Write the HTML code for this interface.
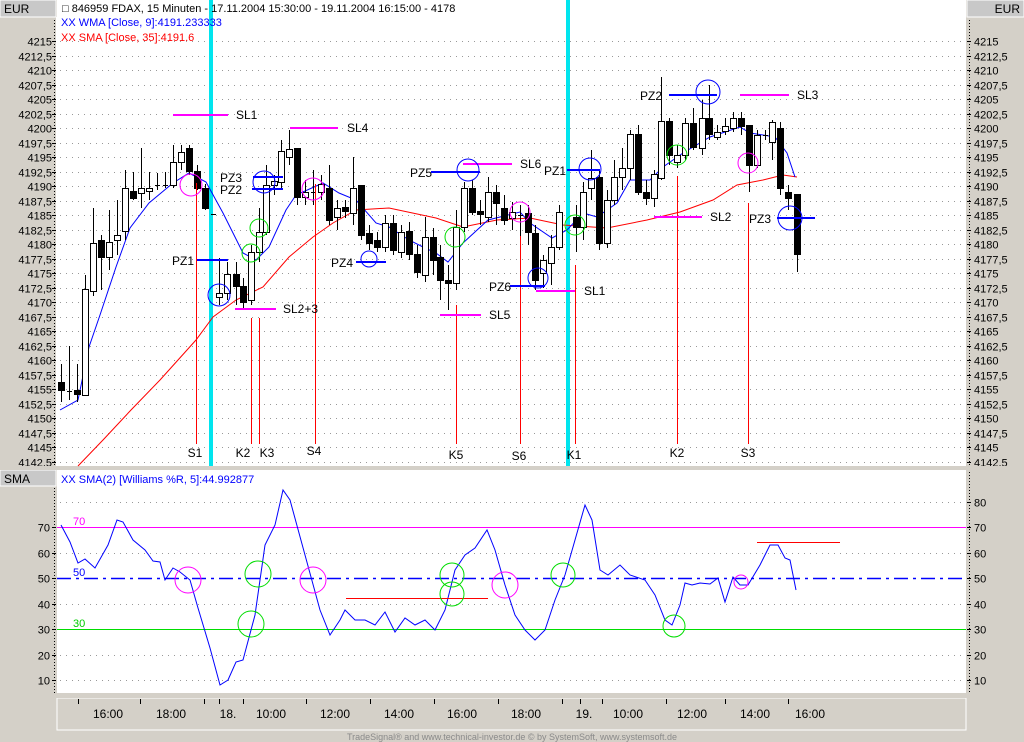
<!DOCTYPE html>
<html><head><meta charset="utf-8"><style>
html,body{margin:0;padding:0;background:#d4d0c8;}
svg{display:block;font-family:"Liberation Sans",sans-serif;}
</style></head><body>
<svg id="s" width="1024" height="742" xmlns="http://www.w3.org/2000/svg">
<rect x="0" y="0" width="1024" height="742" fill="#d4d0c8"/>
<rect x="57" y="0" width="909" height="466" fill="#fff"/>
<rect x="57" y="470" width="909" height="223" fill="#fff"/>
<line x1="56.5" y1="17" x2="56.5" y2="466" stroke="#fff"/>
<rect x="0" y="0" width="56" height="17" fill="#c8c8c8" stroke="#fff"/>
<rect x="967" y="0" width="57" height="17" fill="#c8c8c8" stroke="#fff"/>
<text x="4" y="13" font-size="12">EUR</text>
<text x="1020" y="13" font-size="12" text-anchor="end">EUR</text>
<rect x="0" y="470" width="56" height="16" fill="#c8c8c8" stroke="#fff"/>
<text x="4" y="483" font-size="12">SMA</text>
<rect x="57" y="698" width="909" height="32" fill="#d4d0c8" stroke="#fff"/>
<g id="g"></g>
</svg>
<script>
var g=document.getElementById('g'),h='';
function L(x1,y1,x2,y2,c,w,extra){h+='<line x1="'+x1+'" y1="'+y1+'" x2="'+x2+'" y2="'+y2+'" stroke="'+c+'" stroke-width="'+(w||1)+'" '+(extra||'')+'/>';}
function T(x,y,t,c,a,fs){h+='<text x="'+x+'" y="'+y+'" font-size="'+(fs||11)+'" fill="'+(c||'#000')+'"'+(a?' text-anchor="'+a+'"':'')+'>'+t+'</text>';}
function C(x,y,r,c){h+='<circle cx="'+x+'" cy="'+y+'" r="'+r+'" fill="none" stroke="'+c+'"/>';}
function P(pts,c,w){h+='<polyline fill="none" stroke="'+c+'" stroke-width="'+(w||1)+'" points="'+pts+'"/>';}
// price grid
for(var k=0;k<30;k++){var y=Math.round(41+k*14.517)+.5;var p=4215-k*2.5;var s=(p%1?p.toFixed(1).replace('.',','):p);
L(60,y,966,y,'#999',1,'stroke-dasharray="1,5"');L(52,y,56,y,'#000');L(967,y,971,y,'#000');
T(52,y+4,s,'#000','end');T(974,y+4,s);}
L(969.5,20,969.5,466,'#000',1,'stroke-dasharray="1,2"');L(54.5,20,54.5,466,'#000',1,'stroke-dasharray="1,2"');
// separator
h+='<rect x="0" y="466" width="1024" height="4" fill="#d4d0c8"/>';
// cyan
L(211,0,211,466,'#00e5ee',4);L(568,0,568,466,'#00e5ee',4);
// header text
T(62,12,'&#x25A1; 846959  FDAX, 15 Minuten - 17.11.2004 15:30:00 - 19.11.2004 16:15:00 - 4178','#000');
T(61,26,'XX WMA [Close, 9]:4191.233333','#0000ff');
T(61,41,'XX SMA [Close, 35]:4191.6','#ff0000');
// SMA red
P('78,466 103,440 131,410 160,380 196,340 213,317 236,300 263,287 289,257 313,237 333,223 356,210 389,208 436,218 463,227 497,220 530,218 563,225 607,228 647,220 680,212 713,200 737,185 763,180 783,175 797,177','#ff0000');
// WMA blue
P('60,410 78,400 89,347 100,315 116,267 130,228 149,203 173,183 189,173 206,182 223,213 243,253 256,260 269,247 286,210 296,195 323,183 339,193 356,200 376,223 389,227 409,240 423,247 436,253 448,262 463,243 488,220 520,212 530,223 552,238 567,230 583,213 597,217 617,203 630,180 650,180 663,167 683,153 710,137 740,127 750,133 763,135 775,137 787,153 795,177','#0000ff');
// candles [x,top,bot,fill(1 black,0 white,2 cross),wt,wb]
var c=[[61,382,390,1,364,402],[69,391,391,2,346,400],[77,390,394,1,364,402],[85,289,395,0,275,396],[93,243,291,0,208,296],[101,240,257,1,235,290],[109,242,257,0,210,270],[117,235,240,0,200,255],[125,188,231,0,170,240],[133,191,198,1,172,200],[141,188,193,0,148,208],[149,188,191,0,172,200],[157,185,185,2,173,190],[165,185,185,2,172,188],[173,162,185,0,145,188],[181,152,162,0,145,170],[189,148,171,1,145,175],[197,171,188,1,165,190],[205,188,208,1,184,210],[213,214,214,2,214,214],[219,293,297,0,258,305],[227,274,293,0,262,300],[236,274,286,1,262,305],[243,286,302,1,278,310],[251,252,300,0,245,305],[259,232,252,0,208,262],[266,185,232,0,165,235],[274,181,185,0,175,195],[281,151,182,0,140,190],[289,149,157,0,130,165],[297,148,197,1,148,205],[305,192,197,0,180,205],[313,192,192,2,170,205],[321,184,192,0,175,200],[329,188,220,1,165,225],[337,208,217,0,200,230],[345,207,211,1,200,218],[353,188,213,0,157,225],[361,185,235,1,185,240],[369,233,243,1,225,250],[377,240,247,1,232,252],[385,223,247,0,215,252],[393,223,250,1,215,255],[401,232,252,0,225,258],[409,231,254,1,222,260],[417,254,272,1,245,278],[425,237,275,0,217,282],[433,237,260,1,228,275],[440,257,280,1,245,300],[448,280,283,1,265,310],[456,227,283,0,210,290],[464,188,227,0,182,232],[472,188,212,1,180,215],[480,211,213,1,200,225],[488,192,217,0,177,222],[496,192,203,1,185,225],[504,208,220,1,195,225],[512,212,218,0,202,230],[520,215,215,2,205,240],[528,213,232,1,205,245],[535,233,280,1,225,290],[543,260,273,0,255,288],[551,247,263,0,235,285],[559,212,247,0,205,250],[576,217,227,1,205,252],[583,192,227,0,182,240],[591,178,188,0,150,200],[599,177,243,1,170,250],[607,200,243,0,190,248],[614,177,200,0,160,205],[622,168,177,0,148,190],[630,134,168,0,130,180],[638,134,192,1,125,195],[646,192,198,1,180,205],[654,174,198,0,170,207],[661,121,178,0,77,180],[669,121,155,1,118,165],[677,155,162,0,145,168],[685,123,155,0,118,160],[693,123,147,1,108,150],[702,118,148,0,100,155],[709,118,134,1,85,140],[717,132,137,0,125,140],[725,126,131,0,118,135],[733,118,128,0,112,132],[741,118,126,1,112,135],[749,125,165,1,125,192],[757,135,165,0,130,168],[765,135,135,2,130,140],[772,122,142,0,120,160],[780,128,188,1,122,195],[788,192,198,1,185,210],[797,194,254,1,194,272]];
c.forEach(function(b){var x=b[0]+.5;L(x,b[4],x,b[5],'#000');
if(b[3]==2){L(b[0]-2,b[1]+.5,b[0]+3,b[1]+.5,'#000');}
else h+='<rect x="'+(b[0]-2.5)+'" y="'+b[1]+'.5" width="6" height="'+Math.max(b[2]-b[1],3)+'" fill="'+(b[3]?'#000':'#fff')+'" stroke="#000"/>';});
// red verticals + labels
[[196,183,'S1'],[251,318,'K2'],[259,318,'K3'],[315,184,'S4'],[456,305,'K5'],[520,236,'S6'],[575,265,'K1'],[677,176,'K2'],[748,203,'S3']].forEach(function(v){L(v[0]+.5,v[1],v[0]+.5,444,'#ff0000');});
T(195,457,'S1','#000','middle',12);T(243,457,'K2','#000','middle',12);T(267,457,'K3','#000','middle',12);T(314,455,'S4','#000','middle',12);T(456,459,'K5','#000','middle',12);T(519,460,'S6','#000','middle',12);T(574,459,'K1','#000','middle',12);T(677,457,'K2','#000','middle',12);T(748,457,'S3','#000','middle',12);
// SL magenta
[[173,228,115,'SL1',236],[290,338,128,'SL4',347],[235,276,309,'SL2+3',283],[440,481,315,'SL5',489],[463,512,164,'SL6',520],[536,575,291,'SL1',584],[654,702,217,'SL2',710],[740,789,95,'SL3',797]].forEach(function(s){L(s[0],s[2],s[1],s[2],'#ff00ff',2);T(s[4],s[2]+4,s[3],'#000',null,12);});
// PZ blue
[[197,228,260,'PZ1',172],[253,283,177,'PZ3',220],[252,283,189,'PZ2',220],[356,386,262,'PZ4',331],[431,480,172,'PZ5',410],[510,545,286,'PZ6',489],[567,600,170,'PZ1',544],[669,717,95,'PZ2',640],[777,815,218,'PZ3',749]].forEach(function(s){L(s[0],s[2],s[1],s[2],'#0000ff',2);T(s[4],s[2]+5,s[3],'#000',null,12);});
C(219,295,11,'#0000ff');C(264,182,11,'#0000ff');C(468,170,11,'#0000ff');C(590,169,11,'#0000ff');C(708,92,12,'#0000ff');C(790,218,12,'#0000ff');C(369,259,8,'#0000ff');C(538,278,10,'#0000ff');
C(191,185,11,'#ff00ff');C(313,189,11,'#ff00ff');C(520,212,10,'#ff00ff');C(748,163,10,'#ff00ff');
C(259,228,9,'#00dd00');C(251,253,9,'#00dd00');C(455,237,10,'#00dd00');C(575,225,10,'#00dd00');C(677,155,10,'#00dd00');
// lower panel
[80,60,40,20,10].forEach(function(v){var y=Math.round(527+(70-v)*2.55)+.5;L(60,y,966,y,'#999',1,'stroke-dasharray="1,5"');});
[80,70,60,50,40,30,20,10].forEach(function(v){var y=Math.round(527+(70-v)*2.55)+.5;L(967,y,971,y,'#000');T(974,y+4,v);if(v<80){L(52,y,56,y,'#000');T(50,y+4,v,'#000','end');}});
L(969.5,472,969.5,693,'#000',1,'stroke-dasharray="1,2"');L(54.5,488,54.5,693,'#000',1,'stroke-dasharray="1,2"');
L(57,527.5,966,527.5,'#ff00ff');L(57,629.5,966,629.5,'#00dd00');L(57,578.5,966,578.5,'#0000ff',1.5,'stroke-dasharray="14,5,3,5"');
T(73,525,'70','#ff00ff');T(73,576,'50','#0000ff');T(73,627,'30','#00cc00');
T(61,483,'XX SMA(2) [Williams %R, 5]:44.992877','#0000ff');
P('61,525 70,542 78,563 85,559 95,568 108,545 117,520 123,522 133,540 145,550 153,561 160,562 165,580 173,568 180,572 190,580 198,608 210,648 220,685 228,680 236,662 243,660 255,615 265,545 275,525 283,490 290,500 305,555 320,610 330,635 340,620 345,610 355,620 365,620 375,625 385,612 395,632 405,618 415,625 425,620 435,630 445,610 455,570 465,555 475,548 487,530 495,550 505,585 515,615 525,630 535,640 545,630 555,600 565,575 575,540 585,505 592,520 600,570 608,575 620,565 630,575 645,580 655,595 665,620 672,625 680,605 685,583 692,585 700,583 710,584 718,578 725,602 733,577 740,585 748,585 760,565 770,545 778,545 785,558 790,560 796,590','#0000ff');
L(346,598.5,488,598.5,'#ff0000');L(757,542.5,840,542.5,'#ff0000');
C(188,580,13,'#ff00ff');C(313,580,13,'#ff00ff');C(505,585,13,'#ff00ff');C(741,582,7,'#ff00ff');
C(258,574,13,'#00dd00');C(251,624,13,'#00dd00');C(452,575,12,'#00dd00');C(452,594,12,'#00dd00');C(563,575,12,'#00dd00');C(674,626,11,'#00dd00');
h+='<rect x="0" y="693" width="1024" height="5" fill="#d4d0c8"/>';
// time axis
[78,140,204,219,243,306,370,434,498,562,580,602,666,725,788].forEach(function(x){L(x+.5,699,x+.5,704,'#000');});
[[108,'16:00'],[171,'18:00'],[228,'18.'],[271,'10:00'],[335,'12:00'],[399,'14:00'],[462,'16:00'],[526,'18:00'],[584,'19.'],[628,'10:00'],[692,'12:00'],[755,'14:00'],[810,'16:00']].forEach(function(t){T(t[0],718,t[1],'#000','middle',12);});
T(512,740,'TradeSignal® and www.technical-investor.de © by SystemSoft, www.systemsoft.de','#8a8a8a','middle',9);
g.innerHTML=h;
</script>
</body></html>
